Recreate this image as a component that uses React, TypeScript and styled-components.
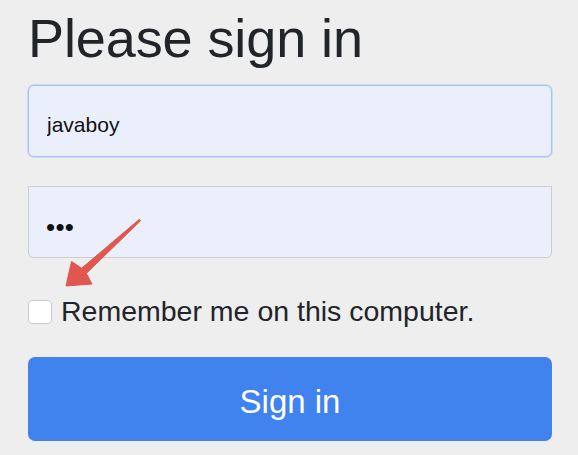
import React from "react";
import styled, { createGlobalStyle } from "styled-components";

const GlobalStyle = createGlobalStyle`
  html, body {
    margin: 0;
    padding: 0;
    background: #eeeeee;
  }
  body {
    font-family: "Liberation Sans", Arial, sans-serif;
    width: 578px;
    height: 455px;
    overflow: hidden;
  }
`;

const Page = styled.div`
  position: relative;
  width: 578px;
  height: 455px;
  box-sizing: border-box;
  padding: 11px 26px 0 28px;
`;

const Form = styled.form`
  display: flex;
  flex-direction: column;
  margin: 0;
`;

const Title = styled.h1`
  margin: 0;
  font-family: "Liberation Sans", Arial, sans-serif;
  font-weight: 400;
  font-size: 54px;
  line-height: 54px;
  color: #212529;
  letter-spacing: -0.1px;
`;

const Field = styled.input<{ $focused?: boolean; $first?: boolean }>`
  box-sizing: border-box;
  display: block;
  width: 524px;
  height: 72px;
  margin: ${(p) => (p.$first ? "20px 0 0" : "29px 0 0")};
  padding: 8px 18px 0;
  background: #eaeffb;
  border: 1px solid ${(p) => (p.$focused ? "#a3c4f6" : "#cdcdcd")};
  border-radius: ${(p) => (p.$first ? "6px" : "0 0 5px 5px")};
  box-shadow: ${(p) => (p.$focused ? "0 0 0 1px rgba(140,180,245,0.35)" : "none")};
  font-family: "Liberation Sans", Arial, sans-serif;
  font-size: 21px;
  color: #111;
  outline: none;
`;

const PasswordField = styled(Field)`
  font-size: 26px;
  letter-spacing: 0.3px;
  padding-left: 17px;
  padding-top: 10px;
`;

const CheckRow = styled.label`
  display: flex;
  align-items: center;
  gap: 9px;
  margin-top: 42px;
  height: 24px;
  font-family: "Liberation Sans", Arial, sans-serif;
  font-size: 28.5px;
  color: #212529;
`;

const Box = styled.input`
  appearance: none;
  -webkit-appearance: none;
  box-sizing: border-box;
  margin: 0;
  width: 24px;
  height: 24px;
  flex: none;
  background: #ffffff;
  border: 1px solid #c9c9c9;
  border-radius: 4px;
`;

const LabelText = styled.span`
  position: relative;
  top: -1px;
`;

const Submit = styled.button`
  box-sizing: border-box;
  width: 524px;
  height: 84px;
  margin-top: 33px;
  padding: 5px 0 0;
  border: none;
  border-radius: 7px;
  background: #4083ee;
  color: #ffffff;
  font-family: "Liberation Sans", Arial, sans-serif;
  font-size: 33px;
  cursor: pointer;
`;

const Overlay = styled.svg`
  position: absolute;
  left: 0;
  top: 0;
  pointer-events: none;
`;

export default function App() {
  return (
    <>
      <GlobalStyle />
      <Page>
        <Form onSubmit={(e) => e.preventDefault()}>
          <Title>Please sign in</Title>
          <Field $first $focused type="text" defaultValue="javaboy" readOnly />
          <PasswordField type="password" defaultValue="123" readOnly />
          <CheckRow>
            <Box type="checkbox" />
            <LabelText>Remember me on this computer.</LabelText>
          </CheckRow>
          <Submit type="submit">Sign in</Submit>
        </Form>
        <Overlay width="578" height="455" viewBox="0 0 578 455">
          <polygon
            points="139.4,219.3 81.7,268.2 71.5,261.5 66,286 92,284 86.3,273.4 140.6,220.7"
            fill="#e0574f"
            stroke="#e0574f"
            strokeWidth="1"
            strokeLinejoin="round"
          />
        </Overlay>
      </Page>
    </>
  );
}
